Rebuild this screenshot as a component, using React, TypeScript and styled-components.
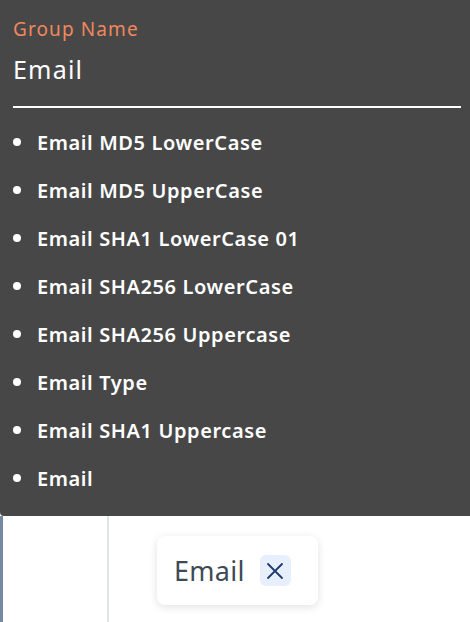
import styled, { createGlobalStyle } from "styled-components";

const GlobalStyle = createGlobalStyle`
  html, body {
    margin: 0;
    padding: 0;
    background: #ffffff;
  }
  body {
    font-family: "Noto Sans", "Open Sans", sans-serif;
  }
`;

const Page = styled.div`
  width: 470px;
  height: 622px;
  display: flex;
  flex-direction: column;
  overflow: hidden;
`;

const Tooltip = styled.div`
  background: #474747;
  color: #ffffff;
  padding: 16px 9px 0 13px;
  height: 516px;
  box-sizing: border-box;
  border-bottom-left-radius: 4px;
  flex-shrink: 0;
`;

const Caption = styled.div`
  color: #f0875d;
  font-size: 19px;
  line-height: 26px;
  letter-spacing: 1.1px;
`;

const GroupTitle = styled.div`
  font-size: 25px;
  line-height: 34px;
  letter-spacing: 1.2px;
  margin-top: 10px;
  padding-bottom: 20px;
  border-bottom: 2px solid #ffffff;
`;

const List = styled.ul`
  list-style: none;
  margin: 0;
  padding: 10px 0 0 0;
  display: flex;
  flex-direction: column;
`;

const Item = styled.li`
  display: flex;
  align-items: center;
  height: 48px;
  font-size: 20px;
  font-weight: 600;
  letter-spacing: 0.6px;

  &::before {
    content: "";
    width: 8px;
    height: 8px;
    border-radius: 50%;
    background: #ffffff;
    margin: 0 16px 0 0;
  }
`;

const Workspace = styled.div`
  flex: 1;
  display: flex;
  border-left: 3px solid #7788a3;
`;

const SideColumn = styled.div`
  width: 104px;
  border-right: 2px solid #dfe4ea;
`;

const Canvas = styled.div`
  flex: 1;
  padding: 20px 0 0 48px;
`;

const Chip = styled.div`
  display: inline-flex;
  align-items: center;
  gap: 15px;
  height: 69px;
  padding: 0 27px 0 17px;
  box-sizing: border-box;
  background: #ffffff;
  border-radius: 8px;
  box-shadow: 0 2px 8px rgba(0, 0, 0, 0.12);
`;

const ChipLabel = styled.span`
  color: #3e4a56;
  font-size: 27px;
  letter-spacing: 0.3px;
`;

const RemoveButton = styled.button`
  width: 31px;
  height: 31px;
  border: none;
  border-radius: 6px;
  background: #e7effc;
  display: flex;
  align-items: center;
  justify-content: center;
  padding: 0;
  cursor: pointer;
`;

const items = [
  "Email MD5 LowerCase",
  "Email MD5 UpperCase",
  "Email SHA1 LowerCase 01",
  "Email SHA256 LowerCase",
  "Email SHA256 Uppercase",
  "Email Type",
  "Email SHA1 Uppercase",
  "Email",
];

export default function App() {
  return (
    <>
      <GlobalStyle />
      <Page>
        <Tooltip>
          <Caption>Group Name</Caption>
          <GroupTitle>Email</GroupTitle>
          <List>
            {items.map((name) => (
              <Item key={name}>{name}</Item>
            ))}
          </List>
        </Tooltip>
        <Workspace>
          <SideColumn />
          <Canvas>
            <Chip>
              <ChipLabel>Email</ChipLabel>
              <RemoveButton aria-label="Remove">
                <svg width="18" height="18" viewBox="0 0 18 18">
                  <path
                    d="M2 2 L16 16 M16 2 L2 16"
                    stroke="#1e3a6b"
                    strokeWidth="1.8"
                    strokeLinecap="round"
                  />
                </svg>
              </RemoveButton>
            </Chip>
          </Canvas>
        </Workspace>
      </Page>
    </>
  );
}
